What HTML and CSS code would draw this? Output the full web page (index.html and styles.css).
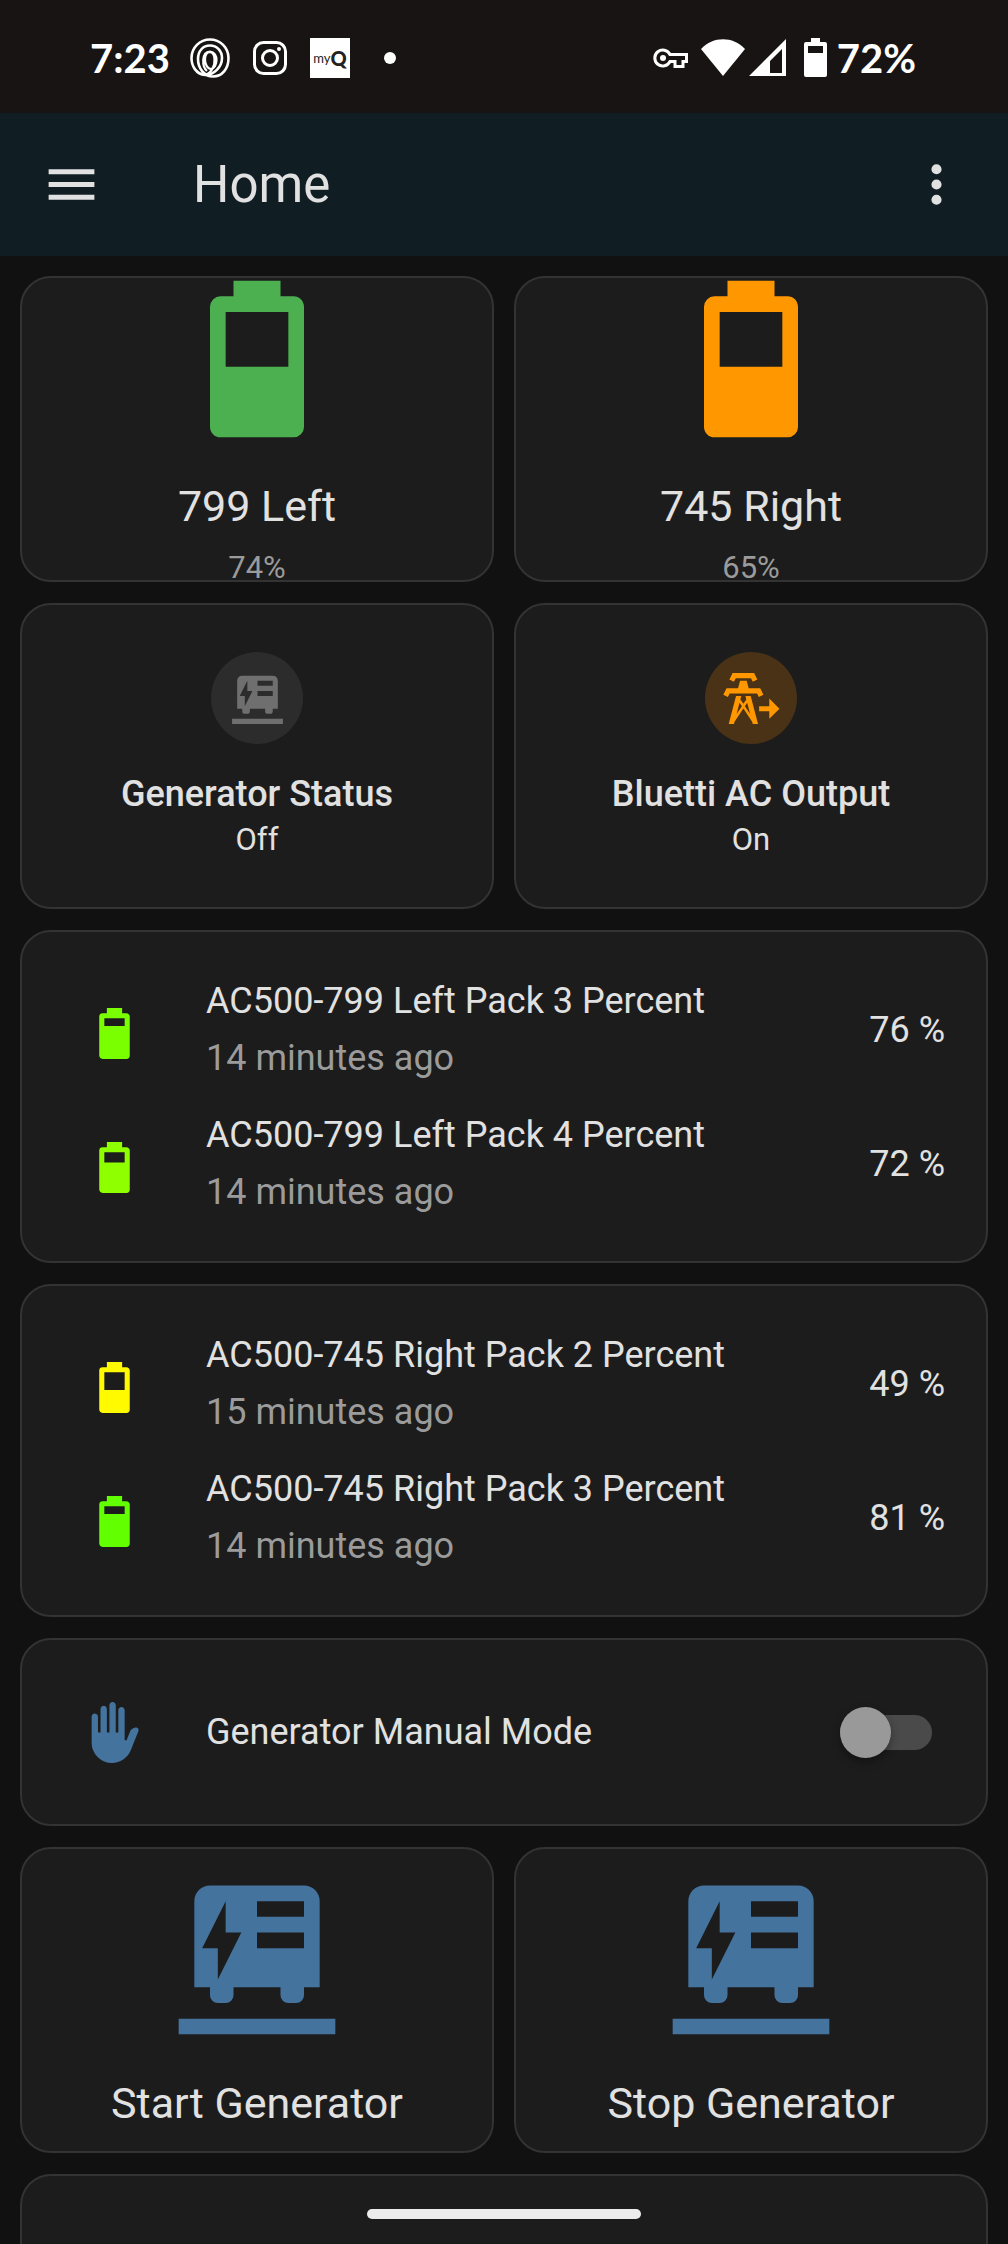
FILE: index.html
```html
<!DOCTYPE html>
<html lang="en">
<head>
  <meta charset="UTF-8" />
  <meta name="viewport" content="width=device-width, initial-scale=1.0"/>
  <title>Home</title>
  <link rel="stylesheet" href="styles.css">
</head>
<body>

  <div class="status-bar">
    <div class="status-left">
      <span class="clock">7:23</span>
      <svg class="status-icon" viewBox="0 0 40 40" fill="none" stroke="#fff" stroke-width="2.6">
        <path d="M15 37C6 36 1.500 28 1.500 20A18.500 18.500 0 0 1 38.500 20C38.500 31 32 38.500 23 38.500C14 38.500 8 30 8 21C8 13 13 7.500 20 7.500C27 7.500 32 13 32 20C32 29 24 37 15 37"/>
        <path d="M15 37C22 35 25 27 24.500 21C24 12 15.500 12 15 21C14.800 25 17 31 21 31C28 30 29 14 20 13.500C11 14 12 29 17 33" stroke-width="2.200"/>
      </svg>
      <svg class="status-icon" viewBox="0 0 40 40" fill="none" stroke="#fff" stroke-width="3">
        <rect x="4.500" y="4.500" width="31" height="31" rx="9"/>
        <circle cx="20" cy="20" r="7.500"/>
        <circle cx="29" cy="11" r="2" fill="#fff" stroke="none"/>
      </svg>
      <span class="myq">my<b>Q</b></span>
      <svg class="status-icon" viewBox="0 0 40 40"><circle cx="20" cy="20" r="6" fill="#fff"/></svg>
    </div>
    <div class="status-right">
      <svg class="key" width="36" height="22" viewBox="0 0 36 22" fill="none" stroke="#fff" stroke-width="3">
        <path d="M17 7.500A8 8 0 1 0 17 14.500H22V19.500H30V14.500H33.500V7.500Z"/>
        <circle cx="10" cy="11" r="3" fill="#fff" stroke="none"/>
      </svg>
      <svg width="44" height="38" viewBox="0 0 44 38" fill="#fff"><path d="M22 37L0 10C12-3 32-3 44 10Z"/></svg>
      <svg class="signal" width="37" height="38" viewBox="0 0 37 38" fill="#fff" fill-rule="evenodd"><path d="M37 0V37H0ZM33 10L21 22V34H33Z"/></svg>
      <svg class="phone-battery" width="23" height="40" viewBox="0 0 23 40" fill="#fff" fill-rule="evenodd"><path d="M7 0H16V4H21Q23 4 23 6V37Q23 39 21 39H2Q0 39 0 37V6Q0 4 2 4H7ZM4 8V15H19V8Z"/></svg>
      <span class="clock">72%</span>
    </div>
  </div>

  <header class="toolbar">
    <button class="icon-button" aria-label="Menu">
      <svg class="icon" viewBox="0 0 24 24"><path d="M3,6H21V8H3V6M3,11H21V13H3V11M3,16H21V18H3V16Z"/></svg>
    </button>
    <h1>Home</h1>
    <button class="icon-button" aria-label="More options">
      <svg class="icon" viewBox="0 0 24 24"><path d="M12,16A2,2 0 0,1 14,18A2,2 0 0,1 12,20A2,2 0 0,1 10,18A2,2 0 0,1 12,16M12,10A2,2 0 0,1 14,12A2,2 0 0,1 12,14A2,2 0 0,1 10,12A2,2 0 0,1 12,10M12,4A2,2 0 0,1 14,6A2,2 0 0,1 12,8A2,2 0 0,1 10,6A2,2 0 0,1 12,4Z"/></svg>
    </button>
  </header>

  <!-- shared shapes -->
  <svg class="sprite" width="0" height="0" aria-hidden="true">
    <symbol id="generator" viewBox="0 0 24 24">
      <path fill-rule="evenodd" d="M6,3H18A2,2 0 0,1 20,5V16H18V17A1,1 0 0,1 17,18H16A1,1 0 0,1 15,17V16H9V17A1,1 0 0,1 8,18H7A1,1 0 0,1 6,17V16H4V5A2,2 0 0,1 6,3M12,5V7H18V5H12M12,9V11H18V9H12M8,5L5,11H7V15L10,9H8V5M2,20H22V22H2V20Z"/>
    </symbol>
    <symbol id="battery-50" viewBox="0 0 24 24">
      <path d="M16,13H8V6H16M16.67,4H15V2H9V4H7.33A1.33,1.33 0 0,0 6,5.33V20.67C6,21.4 6.6,22 7.33,22H16.67A1.33,1.33 0 0,0 18,20.67V5.33C18,4.6 17.4,4 16.67,4Z"/>
    </symbol>
    <symbol id="battery-70" viewBox="0 0 24 24">
      <path d="M16,10H8V6H16M16.67,4H15V2H9V4H7.33A1.33,1.33 0 0,0 6,5.33V20.67C6,21.4 6.6,22 7.33,22H16.67A1.33,1.33 0 0,0 18,20.67V5.33C18,4.6 17.4,4 16.67,4Z"/>
    </symbol>
    <symbol id="battery-80" viewBox="0 0 24 24">
      <path d="M16,9H8V6H16M16.67,4H15V2H9V4H7.33A1.33,1.33 0 0,0 6,5.33V20.67C6,21.4 6.6,22 7.33,22H16.67A1.33,1.33 0 0,0 18,20.67V5.33C18,4.6 17.4,4 16.67,4Z"/>
    </symbol>
  </svg>

  <main class="cards">
    <div class="card button-card">
      <svg class="big-icon green"><use href="#battery-50"/></svg>
      <div class="name">799 Left</div>
      <div class="state">74%</div>
    </div>
    <div class="card button-card">
      <svg class="big-icon orange"><use href="#battery-50"/></svg>
      <div class="name">745 Right</div>
      <div class="state">65%</div>
    </div>

    <div class="card tile">
      <div class="tile-icon">
        <svg class="icon"><use href="#generator"/></svg>
      </div>
      <div class="tile-name">Generator Status</div>
      <div class="tile-state">Off</div>
    </div>
    <div class="card tile">
      <div class="tile-icon on">
        <svg class="icon" viewBox="0 0 24 24">
          <path transform="translate(-3.2 0)" d="M8.28,5.45L6.5,4.55L7.76,2H16.23L17.5,4.55L15.72,5.44L15,4H9L8.28,5.45M18.62,8H14.09L13.3,5H10.7L9.91,8H5.38L4.1,10.55L5.89,11.44L6.62,10H17.38L18.1,11.45L19.89,10.56L18.62,8M17.77,22H15.7L15.46,21.1L12,15.9L8.53,21.1L8.3,22H6.23L9.12,11H11.19L10.83,12.35L12,14.1L13.16,12.35L12.81,11H14.88L17.77,22M11.4,15L10.5,13.65L9.32,18.13L11.4,15M14.68,18.12L13.5,13.64L12.6,15L14.68,18.12Z"/>
          <path d="M19,12L23,16L19,20V17H15V15H19V12Z"/>
        </svg>
      </div>
      <div class="tile-name">Bluetti AC Output</div>
      <div class="tile-state">On</div>
    </div>

    <div class="card entities">
      <div class="entity">
        <div class="badge"><svg class="icon pct-76"><use href="#battery-80"/></svg></div>
        <div class="info">
          <div>AC500-799 Left Pack 3 Percent</div>
          <div class="secondary">14 minutes ago</div>
        </div>
        <div class="value">76 %</div>
      </div>
      <div class="entity">
        <div class="badge"><svg class="icon pct-72"><use href="#battery-70"/></svg></div>
        <div class="info">
          <div>AC500-799 Left Pack 4 Percent</div>
          <div class="secondary">14 minutes ago</div>
        </div>
        <div class="value">72 %</div>
      </div>
    </div>

    <div class="card entities">
      <div class="entity">
        <div class="badge"><svg class="icon pct-49"><use href="#battery-50"/></svg></div>
        <div class="info">
          <div>AC500-745 Right Pack 2 Percent</div>
          <div class="secondary">15 minutes ago</div>
        </div>
        <div class="value">49 %</div>
      </div>
      <div class="entity">
        <div class="badge"><svg class="icon pct-81"><use href="#battery-80"/></svg></div>
        <div class="info">
          <div>AC500-745 Right Pack 3 Percent</div>
          <div class="secondary">14 minutes ago</div>
        </div>
        <div class="value">81 %</div>
      </div>
    </div>

    <div class="card manual">
      <div class="manual-icon">
        <svg class="icon blue" viewBox="0 0 24 24"><path d="M3,16V5.75C3,5.06 3.56,4.5 4.25,4.5C4.94,4.5 5.5,5.06 5.5,5.75V12H6.5V2.75C6.5,2.06 7.06,1.5 7.75,1.5C8.44,1.5 9,2.06 9,2.75V12H10V1.25C10,0.56 10.56,0 11.25,0C11.94,0 12.5,0.56 12.5,1.25V12H13.5V3.25C13.5,2.56 14.06,2 14.75,2C15.44,2 16,2.56 16,3.25V15H16.75L18.16,11.47C18.38,10.92 18.84,10.5 19.4,10.31L20.19,10.05C21,9.79 21.74,10.58 21.43,11.37L18.4,19C17.19,22 14.26,24 11,24A8,8 0 0,1 3,16Z"/></svg>
      </div>
      <label class="info" for="manual-mode">Generator Manual Mode</label>
      <input type="checkbox" id="manual-mode" class="switch">
    </div>

    <button class="card button-card">
      <svg class="big-icon blue"><use href="#generator"/></svg>
      <span class="name">Start Generator</span>
    </button>
    <button class="card button-card">
      <svg class="big-icon blue"><use href="#generator"/></svg>
      <span class="name">Stop Generator</span>
    </button>

    <div class="card next-card"></div>
  </main>

  <div class="nav-pill"></div>

</body>
</html>
```
FILE: styles.css
```css
* {
  box-sizing: border-box;
}

body {
  display: flex;
  flex-direction: column;
  height: 100vh;
  margin: 0;
  overflow: hidden;
  background-color: #111;
  color: #e1e1e1;
  font-family: Roboto, "Liberation Sans", sans-serif;
  font-size: 36px;
}

button {
  font-family: inherit;
  color: inherit;
  cursor: pointer;
}

svg {
  display: block;
  flex: none;
}

.sprite {
  position: absolute;
}

/* phone status bar */
.status-bar {
  display: flex;
  flex: none;
  justify-content: space-between;
  align-items: center;
  height: 113px;
  padding: 2px 92px 0 90px;
  background-color: #181413;
  color: #fff;
}

.status-left,
.status-right {
  display: flex;
  align-items: center;
}

.status-left {
  gap: 20px;
}

.clock {
  font-family: Lato, sans-serif;
  font-size: 40px;
  font-weight: 700;
  line-height: 48px;
}

.status-icon {
  width: 40px;
  height: 40px;
}

.myq {
  display: flex;
  justify-content: center;
  align-items: center;
  width: 40px;
  height: 40px;
  background-color: #fff;
  color: #222;
  font-family: Lato, sans-serif;
  font-size: 13px;
}

.myq b {
  font-size: 20px;
  font-weight: 900;
}

.key {
  margin-right: 12px;
}

.signal {
  margin: 0 18px 0 4px;
}

.phone-battery {
  margin-right: 10px;
}

/* header */
.toolbar {
  display: flex;
  flex: none;
  align-items: center;
  height: 143px;
  padding: 0 11px 0 10px;
  background-color: #101e24;
}

.toolbar h1 {
  flex: 1;
  margin: 0;
  padding-left: 61px;
  font-size: 51px;
  font-weight: 400;
}

.icon-button {
  display: flex;
  justify-content: center;
  align-items: center;
  width: 122px;
  height: 122px;
  padding: 0;
  background: none;
  border: none;
}

.icon {
  width: 61px;
  height: 61px;
  fill: currentColor;
}

/* cards */
.cards {
  display: grid;
  grid-template-columns: 1fr 1fr;
  grid-template-rows: repeat(6, auto) 1fr;
  flex: 1;
  gap: 21px 20px;
  padding: 20px 20px 0;
}

.card {
  background-color: #1c1c1c;
  border: 2px solid #333;
  border-radius: 31px;
}

.button-card,
.tile {
  display: flex;
  flex-direction: column;
  justify-content: center;
  align-items: center;
  height: 306px;
  padding: 0;
}

.big-icon {
  width: 188px;
  height: 188px;
  margin-bottom: 18px;
  fill: currentColor;
}

.name {
  font-size: 43px;
  line-height: 71px;
}

.state {
  color: #9b9b9b;
  font-size: 31px;
  line-height: 51px;
}

.tile-icon {
  display: flex;
  justify-content: center;
  align-items: center;
  width: 92px;
  height: 92px;
  margin-bottom: 25px;
  border-radius: 50%;
  background-color: #2c2c2c;
  color: #6f6f6f;
}

.tile-icon.on {
  background-color: #493216;
  color: #ff9800;
}

.tile-name {
  font-weight: 500;
  line-height: 51px;
}

.tile-state {
  font-size: 31px;
  line-height: 40px;
}

.entities,
.manual,
.next-card {
  grid-column: span 2;
}

.entities {
  display: flex;
  flex-direction: column;
  gap: 20px;
  padding: 41px 41px 40px;
}

.entity,
.manual {
  display: flex;
  align-items: center;
}

.entity {
  line-height: 57px;
}

.badge,
.manual-icon {
  display: flex;
  justify-content: center;
  width: 102px;
  margin-right: 41px;
}

.badge {
  padding-top: 6px;
}

.info {
  flex: 1;
}

.secondary {
  color: #9b9b9b;
}

.manual {
  padding: 41px;
  line-height: 102px;
}

.manual-icon {
  align-items: center;
}

.switch {
  position: relative;
  appearance: none;
  width: 92px;
  height: 35px;
  margin: 0 13px 0 0;
  border-radius: 18px;
  background-color: #4a4a4a;
  cursor: pointer;
}

.switch::before {
  content: "";
  position: absolute;
  top: -8px;
  left: 0;
  width: 51px;
  height: 51px;
  border-radius: 50%;
  background-color: #999;
  box-shadow: 0 4px 8px rgba(0,0,0,0.35);
}

.switch:checked::before {
  left: 41px;
}

.next-card {
  border-bottom: none;
  border-radius: 31px 31px 0 0;
}

.green {
  color: #4caf50;
}

.orange {
  color: #ff9800;
}

.blue {
  color: #44739e;
}

.pct-76 {
  color: #7aff00;
}

.pct-72 {
  color: #8fff00;
}

.pct-49 {
  color: #fffa00;
}

.pct-81 {
  color: #61ff00;
}

/* gesture bar */
.nav-pill {
  position: fixed;
  bottom: 25px;
  left: 50%;
  width: 274px;
  height: 10px;
  border-radius: 5px;
  background-color: #ececec;
  transform: translateX(-50%);
}
```
